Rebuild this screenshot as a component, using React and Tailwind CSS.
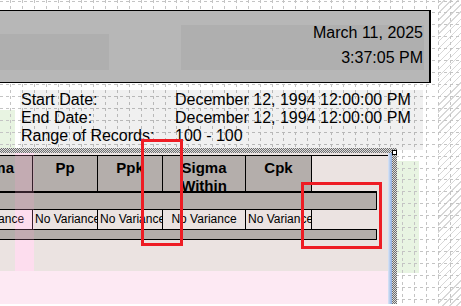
import React from "react";

const columns = [
  { label: ["Sigma"], w: "w-[82px] -ml-[49px]" },
  { label: ["Pp"], w: "w-[65px]" },
  { label: ["Ppk"], w: "w-[65px]" },
  { label: ["Sigma", "Within"], w: "w-[83px]" },
  { label: ["Cpk"], w: "w-[66px]" },
];

const infoRows = [
  ["Start Date:", "December 12, 1994 12:00:00 PM"],
  ["End Date:", "December 12, 1994 12:00:00 PM"],
  ["Range of Records:", "100 - 100"],
];

const gridX = Array.from({ length: 39 }, (_, k) => Math.round(10 + 11.89 * k) + 0.5);
const gridY = Array.from({ length: 27 }, (_, k) => Math.round(0.5 + 11.93 * k) + 0.5);

function DesignerGrid() {
  return (
    <svg className="absolute inset-0" width="461" height="306" shapeRendering="crispEdges">
      {gridX.map((x) => (
        <line key={"x" + x} x1={x} y1="0" x2={x} y2="306" stroke="#c4c4c4" strokeDasharray="3 3" />
      ))}
      {gridY.map((y) => (
        <line key={"y" + y} x1="0" y1={y} x2="461" y2={y} stroke="#c4c4c4" strokeDasharray="3 3" />
      ))}
    </svg>
  );
}

export default function App() {
  return (
    <div className="relative w-[461px] h-[306px] overflow-hidden bg-white font-['Liberation_Sans',Arial,sans-serif] text-black">
      {/* area outside the page */}
      <div className="absolute top-0 bottom-0 left-[438px] right-0 bg-[repeating-linear-gradient(135deg,transparent_0_4px,#d8d8d8_4px_5px)]" />
      {/* band tints */}
      <div className="absolute left-0 top-[110px] w-[15px] h-[42px] bg-[#e8f4e2]" />
      <div className="absolute left-[397px] top-[161px] w-[22px] h-[112px] bg-[#e8f4e2]" />
      <DesignerGrid />

      <div className="relative flex flex-col pt-[10px]">
        {/* page header */}
        <div className="flex items-start w-[431px] h-[73px] bg-[#b7b7b7] border-y border-r-2 border-black">
          <div className="mt-[23px] w-[109px] h-[36px] bg-[#afafaf]" />
          <div className="ml-auto mr-[5px] mt-[14px] w-[243px] h-[45px] bg-[#afafaf] flex flex-col items-end gap-[7px] text-[16px] leading-[18px] pr-px">
            <span className="-mt-px">March 11, 2025</span>
            <span>3:37:05 PM</span>
          </div>
        </div>

        {/* report parameters */}
        <div className="ml-[20px] mt-[7px] w-[403px] h-[60px] bg-black/[0.06] pt-px text-[16px] leading-[18px]">
          {infoRows.map(([label, value]) => (
            <div key={label} className="flex">
              <span className="w-[155px] pl-px whitespace-nowrap">{label}</span>
              <span className="whitespace-nowrap">{value}</span>
            </div>
          ))}
        </div>

        {/* selected detail band */}
        <div className="-mt-[2px] w-[397px] h-[156px] pt-[5px] pr-[5px] bg-[repeating-conic-gradient(#6e6e6e_0%_25%,#dcdcdc_0%_50%)] bg-[length:2px_2px]">
          <div className="flex h-full">
            <div className="relative flex-1 flex flex-col bg-[#fde9f3]">
              <div className="relative h-[118px] bg-[#ebe3e1] pt-[2px] overflow-hidden">
                {/* pink column marker under the cells */}
                <div className="absolute left-[15px] top-0 bottom-0 w-[19px] bg-[#fdedf6]" />
                <div className="relative flex h-[36px] border-t border-black">
                  {columns.map((c, i) => (
                    <div key={i} className={`${c.w} shrink-0 border-r border-black bg-[#b4aeab] text-center pt-[3px] text-[15px] font-bold leading-[18px]`}>
                      {c.label.map((l) => (
                        <div key={l}>{l}</div>
                      ))}
                    </div>
                  ))}
                </div>
                <div className="relative w-[377px] h-[19px] bg-[#b4aeab] border-t-2 border-b border-r border-black rounded-r-[1px]" />
                <div className="relative flex h-[19px]">
                  {columns.map((c, i) => (
                    <div key={i} className={`${c.w} shrink-0 border-r border-black text-center overflow-hidden whitespace-nowrap text-[12px] leading-[19px] px-[2px]`}>
                      No Variance
                    </div>
                  ))}
                </div>
                <div className="relative w-[377px] h-[11px] bg-[#b4aeab] border-y border-r border-black rounded-r-[1px]" />
                {/* pink tint over the cells */}
                <div className="absolute left-[15px] top-0 bottom-0 w-[19px] bg-[#ff9fd2]/20" />
              </div>
            </div>
            <div className="w-[4px] bg-gradient-to-r from-[#dbe6f6] to-[#8eaee0]" />
          </div>
        </div>
      </div>

      {/* resize handle */}
      <div className="absolute left-[392px] top-[150px] w-[5px] h-[5px] bg-white border border-black" />

      {/* red callouts */}
      <div className="absolute left-[141px] top-[139px] w-[42px] h-[107px] border-[3px] border-[#ee1c24]" />
      <div className="absolute left-[301px] top-[182px] w-[81px] h-[67px] border-[3px] border-[#ee1c24]" />
    </div>
  );
}
